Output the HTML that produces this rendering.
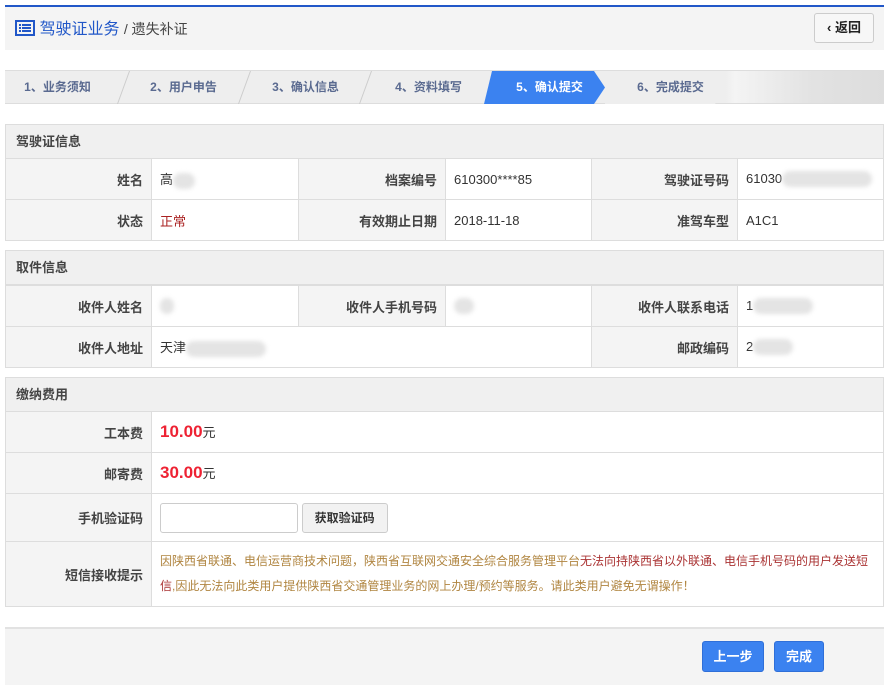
<!DOCTYPE html><html><head><meta charset="utf-8"><style>
*{box-sizing:border-box;margin:0;padding:0}
body{width:890px;height:685px;background:#fff;font-family:"Liberation Sans","Noto Sans CJK SC",sans-serif;font-size:13px;color:#333;position:relative;overflow:hidden}
.top{position:absolute;left:5px;top:5px;width:879px;height:45px;background:#f4f4f4;border-top:2px solid #2157c8}
.title{position:absolute;left:10px;top:8px;font-size:16px;color:#2157c8}
.title span{font-size:14px;color:#444}
.back{position:absolute;right:10px;top:6px;width:60px;height:30px;border:1px solid #ccc;border-radius:3px;background:#f7f7f7;font-size:13px;font-weight:bold;text-align:center;line-height:28px;color:#222}
.steps{position:absolute;left:5px;top:70px;width:879px;height:34px;background:linear-gradient(90deg,#eee 82%,#f4f4f4 83%,#e2e2e2 92%,#ddd);border-top:1px solid #ddd;border-bottom:1px solid #ddd}
.st{position:absolute;top:0;height:33px;line-height:33px;font-size:12px;font-weight:bold;color:#5a6a90;text-align:center;width:121px}
.sep{position:absolute;top:0;width:1px;height:33px;background:#ccc;transform:skewX(-20deg)}
.act{position:absolute;left:479px;top:0;width:121px;height:33px;background:#3b82f0;clip-path:polygon(0 100%,8px 0,110px 0,121px 50%,110px 100%)}
.six{position:absolute;left:600px;top:0;width:121px;height:33px;background:#eee;clip-path:polygon(0 0,110px 0,121px 50%,110px 100%,0 100%)}
table{position:absolute;left:5px;width:879px;border-collapse:collapse}
td{border:1px solid #ddd;height:41px;padding:0 8px;font-size:13px}
td.l{background:#f4f4f4;text-align:right;font-weight:bold;color:#444;width:146px}
.h{position:absolute;left:5px;width:879px;height:35px;background:#f0f0f0;border:1px solid #ddd;font-weight:bold;font-size:13px;line-height:33px;padding-left:10px;color:#444}
.blur{display:inline-block;height:16px;background:#e4e4e4;border-radius:8px;vertical-align:middle;filter:blur(2px)}
.red{color:#e23;font-size:17px;font-weight:bold}
.foot{position:absolute;left:5px;top:627px;width:879px;height:58px;background:#f4f4f4;border-top:2px solid #e2e2e2}
.btn{position:absolute;top:12px;height:31px;background:#3b82f0;border:1px solid #2f6fd8;border-radius:3px;color:#fff;font-weight:bold;text-align:center;line-height:29px}
</style></head><body>
<div class="top"><div class="title"><svg width="20" height="16" viewBox="0 0 20 16" style="vertical-align:-2px"><rect x="1" y="1" width="18" height="14" fill="none" stroke="#2157c8" stroke-width="2"/><rect x="4" y="4" width="2" height="2" fill="#2157c8"/><rect x="4" y="7" width="2" height="2" fill="#2157c8"/><rect x="4" y="10" width="2" height="2" fill="#2157c8"/><rect x="7" y="4" width="9" height="2" fill="#2157c8"/><rect x="7" y="7" width="9" height="2" fill="#2157c8"/><rect x="7" y="10" width="9" height="2" fill="#2157c8"/></svg> 驾驶证业务 <span>/ 遗失补证</span></div><div class="back">‹ 返回</div></div>
<div class="steps">
<div class="six"></div>
<div class="act"></div>
<div class="st" style="left:-8px">1、业务须知</div><div class="sep" style="left:118px"></div>
<div class="st" style="left:118px">2、用户申告</div><div class="sep" style="left:239px"></div>
<div class="st" style="left:240px">3、确认信息</div><div class="sep" style="left:360px"></div>
<div class="st" style="left:363px">4、资料填写</div>
<div class="st" style="left:484px;color:#fff">5、确认提交</div>
<div class="st" style="left:605px">6、完成提交</div>
</div>
<div class="h" style="top:124px">驾驶证信息</div>
<table style="top:158px"><tr><td class="l">姓名</td><td style="width:147px">高<span class="blur" style="width:22px"></span></td><td class="l" style="width:147px">档案编号</td><td style="width:146px">610300****85</td><td class="l">驾驶证号码</td><td>61030<span class="blur" style="width:90px"></span></td></tr>
<tr><td class="l">状态</td><td style="color:#a22">正常</td><td class="l">有效期止日期</td><td>2018-11-18</td><td class="l">准驾车型</td><td>A1C1</td></tr></table>
<div class="h" style="top:250px">取件信息</div>
<table style="top:285px"><tr><td class="l">收件人姓名</td><td style="width:147px"><span class="blur" style="width:14px"></span></td><td class="l" style="width:147px">收件人手机号码</td><td style="width:146px"><span class="blur" style="width:20px"></span></td><td class="l">收件人联系电话</td><td>1<span class="blur" style="width:60px"></span></td></tr>
<tr><td class="l">收件人地址</td><td colspan="3">天津<span class="blur" style="width:80px"></span></td><td class="l">邮政编码</td><td>2<span class="blur" style="width:40px"></span></td></tr></table>
<div class="h" style="top:377px">缴纳费用</div>
<table style="top:411px"><tr><td class="l">工本费</td><td><span class="red">10.00</span>元</td></tr>
<tr><td class="l">邮寄费</td><td><span class="red">30.00</span>元</td></tr>
<tr><td class="l" style="height:48px">手机验证码</td><td><span style="display:inline-block;width:138px;height:30px;border:1px solid #ccc;border-radius:3px;vertical-align:middle"></span> <span style="display:inline-block;width:86px;height:30px;border:1px solid #ccc;border-radius:3px;background:#f2f2f2;vertical-align:middle;text-align:center;line-height:28px;font-weight:bold;font-size:12px">获取验证码</span></td></tr>
<tr><td class="l" style="height:65px">短信接收提示</td><td style="font-size:12px;line-height:25px;color:#b08540">因陕西省联通、电信运营商技术问题，陕西省互联网交通安全综合服务管理平台<span style="color:#a33">无法向持陕西省以外联通、电信手机号码的用户发送短信</span>,因此无法向此类用户提供陕西省交通管理业务的网上办理/预约等服务。请此类用户避免无谓操作！</td></tr></table>
<div class="foot"><div class="btn" style="left:697px;width:62px">上一步</div><div class="btn" style="left:769px;width:50px">完成</div></div>
</body></html>
